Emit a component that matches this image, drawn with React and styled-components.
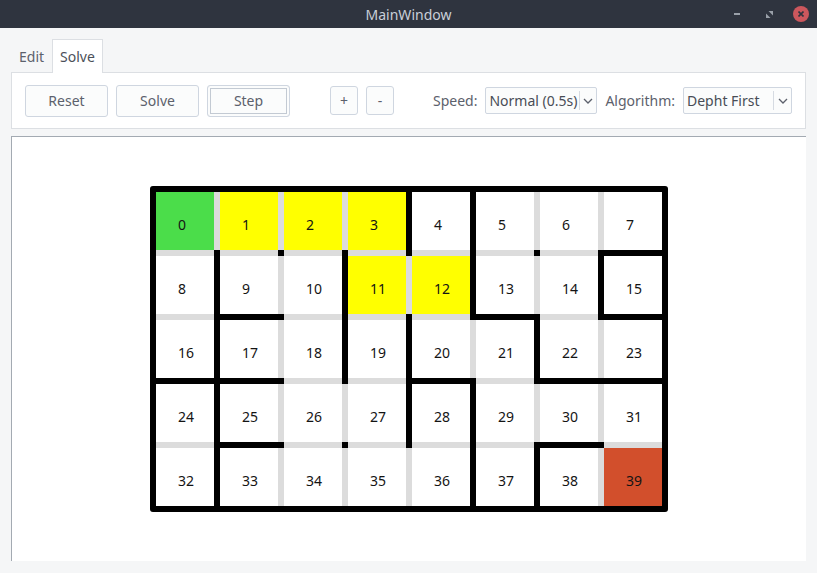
import React from "react";
import styled, { createGlobalStyle } from "styled-components";

const GlobalStyle = createGlobalStyle`
  html, body {
    margin: 0;
    padding: 0;
  }
  body {
    background: #f5f6f7;
    font-family: "Noto Sans", "Open Sans", sans-serif;
  }
`;

const COLS = 8;
const CELL = 58;
const LINE = 6;

// 1 = wall between cell c and c+1 in that row
const vWalls = [
  [0, 0, 0, 1, 1, 0, 0],
  [1, 0, 1, 0, 1, 0, 1],
  [1, 0, 1, 1, 0, 1, 0],
  [1, 0, 0, 1, 1, 0, 0],
  [1, 0, 0, 0, 1, 1, 0],
];

// 1 = wall between row r and r+1 in that column
const hWalls = [
  [0, 0, 0, 0, 0, 0, 0, 1],
  [0, 1, 0, 0, 0, 1, 0, 1],
  [1, 1, 0, 0, 1, 0, 1, 1],
  [0, 1, 0, 0, 0, 0, 1, 0],
];

const cellColors = {
  0: "#4bdd4a",
  1: "#ffff00",
  2: "#ffff00",
  3: "#ffff00",
  11: "#ffff00",
  12: "#ffff00",
  39: "#d24f2c",
};

const Window = styled.div`
  display: flex;
  flex-direction: column;
  height: 573px;
  overflow: hidden;
`;

const TitleBar = styled.header`
  height: 28px;
  flex-shrink: 0;
  background: #2f343f;
  display: grid;
  grid-template-columns: 1fr auto 1fr;
  align-items: center;
  padding: 0 8px;
`;

const Title = styled.div`
  grid-column: 2;
  color: #c9cfd8;
  font-size: 14px;
`;

const WindowControls = styled.div`
  display: flex;
  justify-content: flex-end;
  align-items: center;
  gap: 16px;
`;

const ControlBox = styled.div`
  width: 16px;
  height: 16px;
  display: flex;
  align-items: center;
  justify-content: center;
  border-radius: 50%;
  background: ${(p) => (p.$close ? "#cc575d" : "transparent")};
`;

const Body = styled.main`
  flex: 1;
  display: flex;
  flex-direction: column;
  padding: 11px 11px 12px;
  min-height: 0;
`;

const TabBar = styled.div`
  display: flex;
  height: 33px;
`;

const Tab = styled.div`
  display: flex;
  align-items: center;
  padding: 0 7px;
  font-size: 14px;
  color: ${(p) => (p.$active ? "#4b5059" : "#5c616c")};
  background: ${(p) => (p.$active ? "#ffffff" : "transparent")};
  border: 1px solid ${(p) => (p.$active ? "#dcdfe3" : "transparent")};
  border-bottom: none;
  height: 34px;
  box-sizing: border-box;
  position: relative;
  z-index: 1;
`;

const Panel = styled.section`
  height: 57px;
  box-sizing: border-box;
  background: #ffffff;
  border: 1px solid #dcdfe3;
  display: flex;
  align-items: center;
  padding: 0 13px;
`;

const ButtonGroup = styled.div`
  display: flex;
  align-items: center;
  gap: 8px;
  margin-right: ${(p) => p.$spaceAfter || 0}px;
`;

const Button = styled.button`
  width: ${(p) => (p.$small ? 28 : 83)}px;
  height: ${(p) => (p.$small ? 29 : 32)}px;
  padding: 0;
  font-family: inherit;
  font-size: 14px;
  color: #5c616c;
  background: #fbfcfc;
  border: 1px solid #cfd6e0;
  border-radius: 3px;
  box-shadow: ${(p) =>
    p.$focused ? "inset 0 0 0 2px #fbfcfc, inset 0 0 0 3px #c3cad3" : "none"};
`;

const Spacer = styled.div`
  flex: 1;
`;

const Field = styled.label`
  display: flex;
  align-items: center;
  gap: 8px;
  margin-left: ${(p) => p.$offset || 0}px;
  font-size: 14px;
  color: #5c616c;
`;

const Combo = styled.div`
  width: ${(p) => p.$width}px;
  height: 27px;
  box-sizing: border-box;
  display: flex;
  align-items: center;
  background: #fbfcfc;
  border: 1px solid #cfd6e0;
  border-radius: 2px;
`;

const ComboValue = styled.span`
  flex: 1;
  padding-left: 3px;
  color: #484d56;
  white-space: nowrap;
  overflow: hidden;
`;

const ComboDivider = styled.span`
  width: 1px;
  height: 19px;
  background: #d6dbe2;
`;

const ComboArrow = styled.span`
  width: ${(p) => p.$width}px;
  display: flex;
  align-items: center;
  justify-content: center;
`;

const Canvas = styled.div`
  flex: 1;
  margin-top: 7px;
  background: #ffffff;
  border-top: 1px solid #a3aab2;
  border-left: 1px solid #a3aab2;
  display: flex;
  align-items: center;
  justify-content: center;
`;

const Maze = styled.div`
  display: grid;
  grid-template-columns: ${LINE}px repeat(${COLS}, ${CELL}px ${LINE}px);
  grid-template-rows: ${LINE}px repeat(5, ${CELL}px ${LINE}px);
  background: #dcdcdc;
  border-radius: 3px;
  overflow: hidden;
`;

const Post = styled.div`
  background: #000000;
`;

const Segment = styled.div`
  background: ${(p) => (p.$wall ? "#000000" : "transparent")};
`;

const Cell = styled.div`
  display: flex;
  align-items: center;
  padding: 7px 0 0 22px;
  box-sizing: border-box;
  font-size: 14px;
  color: #141414;
  background: ${(p) => p.$color || "#ffffff"};
`;

const Chevron = () => (
  <svg width="10" height="6" viewBox="0 0 10 6">
    <polyline points="1,1 5,5 9,1" fill="none" stroke="#5c616c" strokeWidth="1.3" />
  </svg>
);

const buildMaze = () => {
  const items = [];
  for (let gr = 0; gr < 11; gr++) {
    for (let gc = 0; gc < 17; gc++) {
      const key = `${gr}-${gc}`;
      const rowLine = gr % 2 === 0;
      const colLine = gc % 2 === 0;
      if (rowLine && colLine) {
        items.push(<Post key={key} />);
      } else if (rowLine) {
        const line = gr / 2;
        const c = (gc - 1) / 2;
        const wall = line === 0 || line === 5 || hWalls[line - 1][c] === 1;
        items.push(<Segment key={key} $wall={wall} />);
      } else if (colLine) {
        const r = (gr - 1) / 2;
        const line = gc / 2;
        const wall = line === 0 || line === 8 || vWalls[r][line - 1] === 1;
        items.push(<Segment key={key} $wall={wall} />);
      } else {
        const n = ((gr - 1) / 2) * COLS + (gc - 1) / 2;
        items.push(
          <Cell key={key} $color={cellColors[n]}>
            {n}
          </Cell>
        );
      }
    }
  }
  return items;
};

const App = () => {
  return (
    <>
      <GlobalStyle />
      <Window>
        <TitleBar>
          <Title>MainWindow</Title>
          <WindowControls>
            <ControlBox>
              <svg width="6" height="2" viewBox="0 0 6 2">
                <rect width="6" height="2" fill="#9aa0a9" />
              </svg>
            </ControlBox>
            <ControlBox>
              <svg width="7" height="7" viewBox="0 0 7 7">
                <polygon points="2.5,0 7,0 7,4.5" fill="#9aa0a9" />
                <polygon points="0,2.5 0,7 4.5,7" fill="#9aa0a9" />
              </svg>
            </ControlBox>
            <ControlBox $close>
              <svg width="6" height="6" viewBox="0 0 6 6">
                <path d="M0.5 0.5 L5.5 5.5 M5.5 0.5 L0.5 5.5" stroke="#2f343f" strokeWidth="1.6" />
              </svg>
            </ControlBox>
          </WindowControls>
        </TitleBar>

        <Body>
          <TabBar>
            <Tab>Edit</Tab>
            <Tab $active>Solve</Tab>
          </TabBar>
          <Panel>
            <ButtonGroup $spaceAfter={40}>
              <Button>Reset</Button>
              <Button>Solve</Button>
              <Button $focused>Step</Button>
            </ButtonGroup>
            <ButtonGroup>
              <Button $small>+</Button>
              <Button $small>-</Button>
            </ButtonGroup>
            <Spacer />
            <Field>
              Speed:
              <Combo $width={112}>
                <ComboValue>Normal (0.5s)</ComboValue>
                <ComboDivider />
                <ComboArrow $width={16}>
                  <Chevron />
                </ComboArrow>
              </Combo>
            </Field>
            <Field $offset={8}>
              Algorithm:
              <Combo $width={109}>
                <ComboValue>Depht First</ComboValue>
                <ComboDivider />
                <ComboArrow $width={17}>
                  <Chevron />
                </ComboArrow>
              </Combo>
            </Field>
          </Panel>
          <Canvas>
            <Maze>{buildMaze()}</Maze>
          </Canvas>
        </Body>
      </Window>
    </>
  );
};

export default App;
